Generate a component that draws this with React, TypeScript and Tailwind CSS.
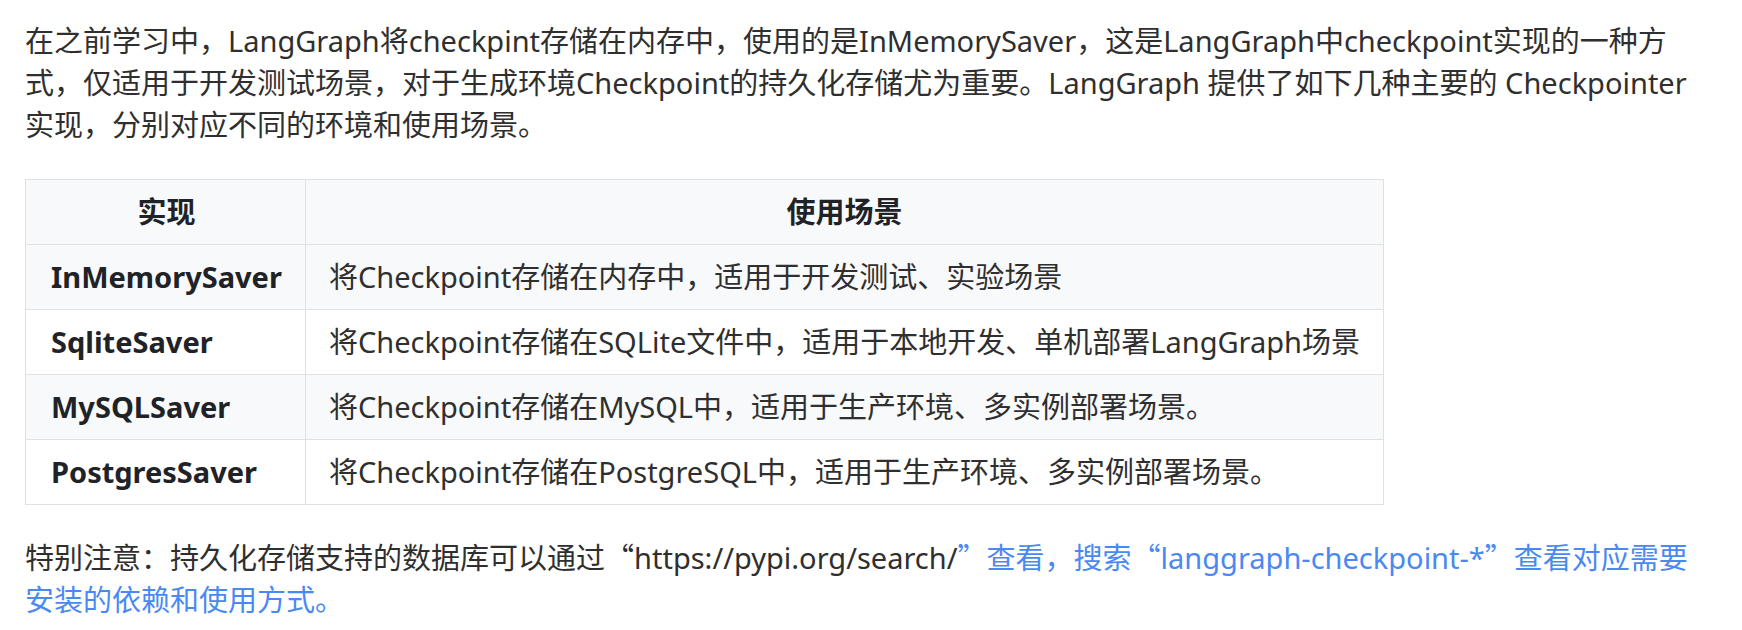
const rows = [
  { name: 'InMemorySaver', desc: '将Checkpoint存储在内存中，适用于开发测试、实验场景' },
  { name: 'SqliteSaver', desc: '将Checkpoint存储在SQLite文件中，适用于本地开发、单机部署LangGraph场景' },
  { name: 'MySQLSaver', desc: '将Checkpoint存储在MySQL中，适用于生产环境、多实例部署场景。' },
  { name: 'PostgresSaver', desc: '将Checkpoint存储在PostgreSQL中，适用于生产环境、多实例部署场景。' },
];

// full-width quotes come from the CJK font, like the reference
const Q = ({ children }: { children: string }) => (
  <span className="font-['Noto_Sans_CJK_SC',sans-serif]">{children}</span>
);

export default function App() {
  return (
    <div className="min-h-screen bg-white px-[25px] pt-[20px] font-['Noto_Sans','Noto_Sans_CJK_SC',sans-serif] text-[29px] leading-[42px] text-[#2f2f2f]">
      <div className="w-[1666px]">
        <p>
          在之前学习中，LangGraph将checkpint存储在内存中，使用的是InMemorySaver，这是LangGraph中checkpoint实现的一种方式，仅适用于开发测试场景，对于生成环境Checkpoint的持久化存储尤为重要。LangGraph 提供了如下几种主要的 Checkpointer 实现，分别对应不同的环境和使用场景。
        </p>

        {/* 实现对照表 */}
        <table className="mt-[33px] border-collapse">
          <thead>
            <tr className="bg-[#f8f9fb]">
              <th className="border border-[#dfe2e5] pl-[25px] pr-[23px] py-[11px] text-center font-bold text-[#1f2328]">实现</th>
              <th className="border border-[#dfe2e5] px-[23px] py-[11px] text-center font-bold text-[#1f2328]">使用场景</th>
            </tr>
          </thead>
          <tbody>
            {rows.map((row, i) => (
              <tr key={row.name} className={i % 2 === 0 ? 'bg-[#f8f9fb]' : 'bg-white'}>
                <td className="border border-[#dfe2e5] pl-[25px] pr-[23px] py-[11px] font-bold text-[#1f2328]">{row.name}</td>
                <td className="border border-[#dfe2e5] px-[23px] py-[11px]">{row.desc}</td>
              </tr>
            ))}
          </tbody>
        </table>

        <p className="mt-[30px]">
          特别注意：持久化存储支持的数据库可以通过<Q>“</Q>https://pypi.org/search/
          <span className="text-[#4a89f3]">
            <Q>”</Q>查看，搜索<Q>“</Q>langgraph-checkpoint-*<Q>”</Q>查看对应需要安装的依赖和使用方式。
          </span>
        </p>
      </div>
    </div>
  );
}
